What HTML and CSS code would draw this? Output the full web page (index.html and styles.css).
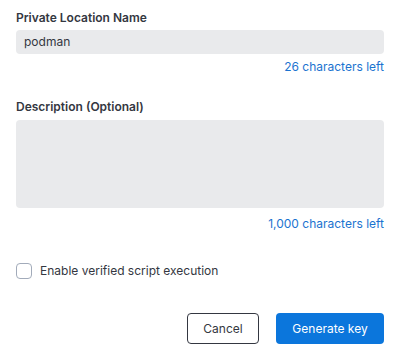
FILE: index.html
```html
<!DOCTYPE html>
<html>
<head>
<meta charset="utf-8">
<link rel="stylesheet" href="styles.css">
</head>
<body>
<div class="form">
  <div class="field">
    <div class="label">Private Location Name</div>
    <div class="input">podman</div>
    <div class="help help-name">26 characters left</div>
  </div>
  <div class="field field-desc">
    <div class="label">Description (Optional)</div>
    <div class="textarea"></div>
    <div class="help help-desc">1,000 characters left</div>
  </div>
  <label class="check">
    <span class="box"></span>
    <span class="check-text">Enable verified script execution</span>
  </label>
  <div class="actions">
    <button class="btn btn-cancel">Cancel</button>
    <button class="btn btn-primary">Generate key</button>
  </div>
</div>
</body>
</html>
```

FILE: styles.css
```css
* { box-sizing: border-box; }
html, body { margin: 0; background: #fff; }
body {
  font-family: Inter, "Noto Sans", sans-serif;
  color: #343741;
  width: 405px;
  height: 356px;
  overflow: hidden;
}
.form {
  padding: 10px 21px 0 16px;
  display: flex;
  flex-direction: column;
}
.label {
  font-size: 12px;
  font-weight: 600;
  line-height: 16px;
  color: #343741;
}
.input {
  margin-top: 4px;
  height: 24px;
  background: #e9eaec;
  border-radius: 4px;
  padding: 0 8px;
  font-size: 12px;
  line-height: 24px;
  color: #343741;
}
.help {
  text-align: right;
  font-size: 12px;
  line-height: 16px;
  color: #1b73d0;
}
.help-name { margin-top: 5px; }
.help-desc { margin-top: 8px; }
.field-desc { margin-top: 24px; }
.textarea {
  margin-top: 5px;
  height: 88px;
  background: #e9eaec;
  border-radius: 4px;
}
.check {
  margin-top: 31px;
  display: flex;
  align-items: center;
  gap: 8px;
  font-size: 12px;
  line-height: 16px;
}
.box {
  width: 16px;
  height: 16px;
  border: 1px solid #a2abba;
  border-radius: 4px;
  background: #fff;
}
.actions {
  margin-top: 34px;
  display: flex;
  justify-content: flex-end;
  gap: 17px;
}
.btn {
  height: 31px;
  border-radius: 4px;
  font-family: Inter, "Noto Sans", sans-serif;
  font-size: 12px;
  padding: 0;
  cursor: pointer;
}
.btn-cancel {
  width: 72px;
  background: #fff;
  border: 1px solid #343741;
  color: #343741;
}
.btn-primary {
  width: 108px;
  background: #0b76dc;
  border: none;
  color: #fff;
}
```
